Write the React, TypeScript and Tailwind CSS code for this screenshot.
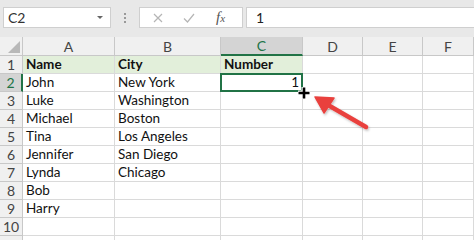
import React from 'react';

const cols = ['A', 'B', 'C', 'D', 'E', 'F'];

const rows: string[][] = [
  ['Name', 'City', 'Number'],
  ['John', 'New York', '1'],
  ['Luke', 'Washington', ''],
  ['Michael', 'Boston', ''],
  ['Tina', 'Los Angeles', ''],
  ['Jennifer', 'San Diego', ''],
  ['Lynda', 'Chicago', ''],
  ['Bob', '', ''],
  ['Harry', '', ''],
  ['', '', ''],
  ['', '', ''],
];

export default function App() {
  return (
    <div className="relative w-[474px] h-[240px] overflow-hidden bg-white font-['Lato','Liberation_Sans',sans-serif] text-[13.5px] text-[#111]">
      {/* Formula bar */}
      <div className="h-[37px] bg-[#e8e8e8] flex items-start pt-[7px] pl-[3px]">
        <div className="w-[108px] h-[21px] bg-white border border-[#cfcfcf] flex items-center justify-between px-[4px]">
          <span className="text-[14px] text-[#333]">C2</span>
          <span className="w-0 h-0 border-l-[3px] border-r-[3px] border-t-[3px] border-l-transparent border-r-transparent border-t-[#666] mr-[3px]" />
        </div>
        <div className="w-[28px] h-[21px] flex flex-col items-center justify-center gap-[2px]">
          <span className="w-[2px] h-[2px] bg-[#999]" />
          <span className="w-[2px] h-[2px] bg-[#999]" />
          <span className="w-[2px] h-[2px] bg-[#999]" />
        </div>
        <div className="w-[104px] h-[21px] bg-white border border-[#cfcfcf] flex items-center">
          <svg width="12" height="12" viewBox="0 0 12 12" className="ml-[12px]">
            <path d="M2 2 L10 10 M10 2 L2 10" stroke="#b5b5b5" strokeWidth="1.2" />
          </svg>
          <svg width="14" height="12" viewBox="0 0 14 12" className="ml-[18px]">
            <path d="M2 6.5 L5.5 10 L12 2" stroke="#b5b5b5" strokeWidth="1.2" fill="none" />
          </svg>
          <span className="ml-[20px] italic font-['Liberation_Serif',serif] text-[15px] text-[#555] leading-none">
            f<span className="text-[11px]">x</span>
          </span>
        </div>
        <div className="ml-[3px] flex-1 h-[21px] bg-white border border-[#cfcfcf] border-r-0 flex items-center pl-[9px]">
          <span className="text-[14px] text-[#222]">1</span>
        </div>
      </div>

      {/* Sheet grid */}
      <div className="grid grid-cols-[23px_92px_106px_82px_60px_60px_1fr] grid-rows-[19px_repeat(11,18px)]">
        {/* Select all */}
        <div className="relative bg-[#f0f0f0] border-r border-b border-[#c8c8c8]">
          <svg className="absolute right-[2px] bottom-[2px]" width="12" height="12" viewBox="0 0 12 12">
            <path d="M12 0 V12 H0 Z" fill="#b8b8b8" />
          </svg>
        </div>
        {cols.map((c) => (
          <div
            key={c}
            className={
              c === 'C'
                ? 'bg-[#d4d4d4] border-r border-[#c8c8c8] border-b-2 border-b-[#217346] flex items-center justify-center text-[#217346] text-[14px]'
                : 'bg-[#f0f0f0] border-r border-b border-[#c8c8c8] flex items-center justify-center text-[#444] text-[14px]'
            }
          >
            {c}
          </div>
        ))}

        {rows.map((r, i) => (
          <React.Fragment key={i}>
            <div
              className={
                i === 1
                  ? 'bg-[#d4d4d4] border-r-2 border-r-[#217346] border-b border-b-[#c8c8c8] flex items-center justify-center text-[#217346] text-[14px]'
                  : 'bg-[#f0f0f0] border-r border-b border-[#c8c8c8] flex items-center justify-center text-[#444] text-[14px]'
              }
            >
              {i + 1}
            </div>
            {[0, 1, 2, 3, 4, 5].map((j) => {
              const v = r[j] ?? '';
              const green = i === 0 && j < 3;
              const selected = i === 1 && j === 2;
              return (
                <div
                  key={j}
                  className={
                    'relative border-r border-b border-[#dadada] flex items-center px-[3px] whitespace-nowrap ' +
                    (green ? 'bg-[#e2efda] font-bold ' : '') +
                    (selected ? 'justify-end ' : '')
                  }
                >
                  {selected && (
                    <div className="absolute -left-[1px] -top-[1px] -right-[1px] -bottom-[1px] border-2 border-[#217346]" />
                  )}
                  <span className="relative">{v}</span>
                </div>
              );
            })}
          </React.Fragment>
        ))}
      </div>

      {/* Fill handle cursor */}
      <svg className="absolute left-[297px] top-[86px]" width="14" height="14" viewBox="0 0 14 14">
        <path d="M7 1 V13 M1 7 H13" stroke="#fff" strokeWidth="5" />
        <path d="M7 1.5 V12.5 M1.5 7 H12.5" stroke="#000" strokeWidth="2.6" />
      </svg>

      {/* Red arrow */}
      <svg className="absolute left-[308px] top-[92px]" width="66" height="44" viewBox="0 0 66 44">
        <defs>
          <filter id="sh" x="-20%" y="-20%" width="140%" height="140%">
            <feDropShadow dx="1" dy="1.5" stdDeviation="1" floodColor="#000" floodOpacity="0.25" />
          </filter>
        </defs>
        <g filter="url(#sh)">
          <path d="M58 35 L20 13" stroke="#e9413e" strokeWidth="4.5" strokeLinecap="round" />
          <path d="M7 5 L26 6 L16 21 Z" fill="#e9413e" stroke="#e9413e" strokeWidth="1.5" strokeLinejoin="round" />
        </g>
      </svg>
    </div>
  );
}
